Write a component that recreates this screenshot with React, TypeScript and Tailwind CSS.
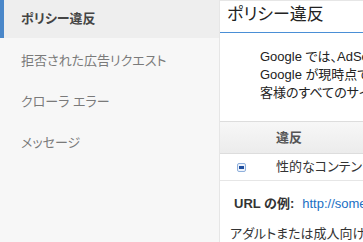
import React from "react";

const font = "font-['Liberation_Sans','Noto_Sans_CJK_JP',sans-serif] [font-feature-settings:'palt']";

function MinusIcon() {
  return (
    <span className="flex h-[9px] w-[9px] items-center justify-center rounded-[2px] border border-[#8fb0dc] bg-[#eef3fb]">
      <span className="h-[3px] w-[5px] bg-[#1f4fa0]" />
    </span>
  );
}

export default function App() {
  return (
    <div className={`flex h-[242px] w-[363px] overflow-hidden bg-[#f7f7f7] ${font}`}>
      <aside className="w-[219px] shrink-0 bg-[#f7f7f7]">
        <div className="flex h-[38px] items-center border-l-4 border-[#4a87c9] bg-[#eeeeee] pl-[17px] text-[13px] font-bold text-[#444]">
          ポリシー違反
        </div>
        <div className="pt-[2px] text-[13px] text-[#7a7a7a]">
          <div className="flex h-[41px] items-center pl-[21px]">拒否された広告リクエスト</div>
          <div className="flex h-[41px] items-center pl-[21px]">クローラ エラー</div>
          <div className="flex h-[41px] items-center pl-[21px]">メッセージ</div>
        </div>
      </aside>
      <main className="min-w-0 flex-1 overflow-hidden border-l border-t border-[#e6e6e6] bg-white">
        <div className="h-[32px] border-b border-[#4a8fd6] pl-[7px] pt-[1px] text-[17px] leading-[26px] text-[#222]">
          ポリシー違反
        </div>
        <div className="whitespace-nowrap pl-[40px] pt-[15px] text-[13px] leading-[18px] text-[#222]">
          <div>Google では、AdSense ポリシーに違反しているサイトを検出し、</div>
          <div>Google が現時点で把握しているお客様のサイトのポリシー違反と、お</div>
          <div>客様のすべてのサイトに関する情報を表示しています。</div>
        </div>
        <div className="mt-[19px] border-t border-[#dddddd]">
          <div className="flex h-[32px] items-center border-b border-[#dddddd] bg-gradient-to-b from-[#f7f7f7] to-[#ececec] pl-[56px] text-[13px] font-bold text-[#555]">
            違反
          </div>
          <div className="flex h-[27px] items-center whitespace-nowrap border-b border-[#e6e6e6] text-[13px] text-[#333]">
            <div className="w-[56px] shrink-0 pl-[17px]">
              <MinusIcon />
            </div>
            <span>性的なコンテンツ</span>
          </div>
        </div>
        <div className="flex h-[44px] items-center whitespace-nowrap pl-[14px] pt-[1px] text-[13px]">
          <span className="font-bold text-[#333]">URL の例:</span>
          <span className="ml-[8px] text-[#1a6fc4]">http://someexample.com/page.html</span>
        </div>
        <div className="whitespace-nowrap pl-[10px] text-[13px] leading-[18px] text-[#333]">
          アダルトまたは成人向けのコンテンツを含むページには広告を掲載できません。
        </div>
      </main>
    </div>
  );
}
